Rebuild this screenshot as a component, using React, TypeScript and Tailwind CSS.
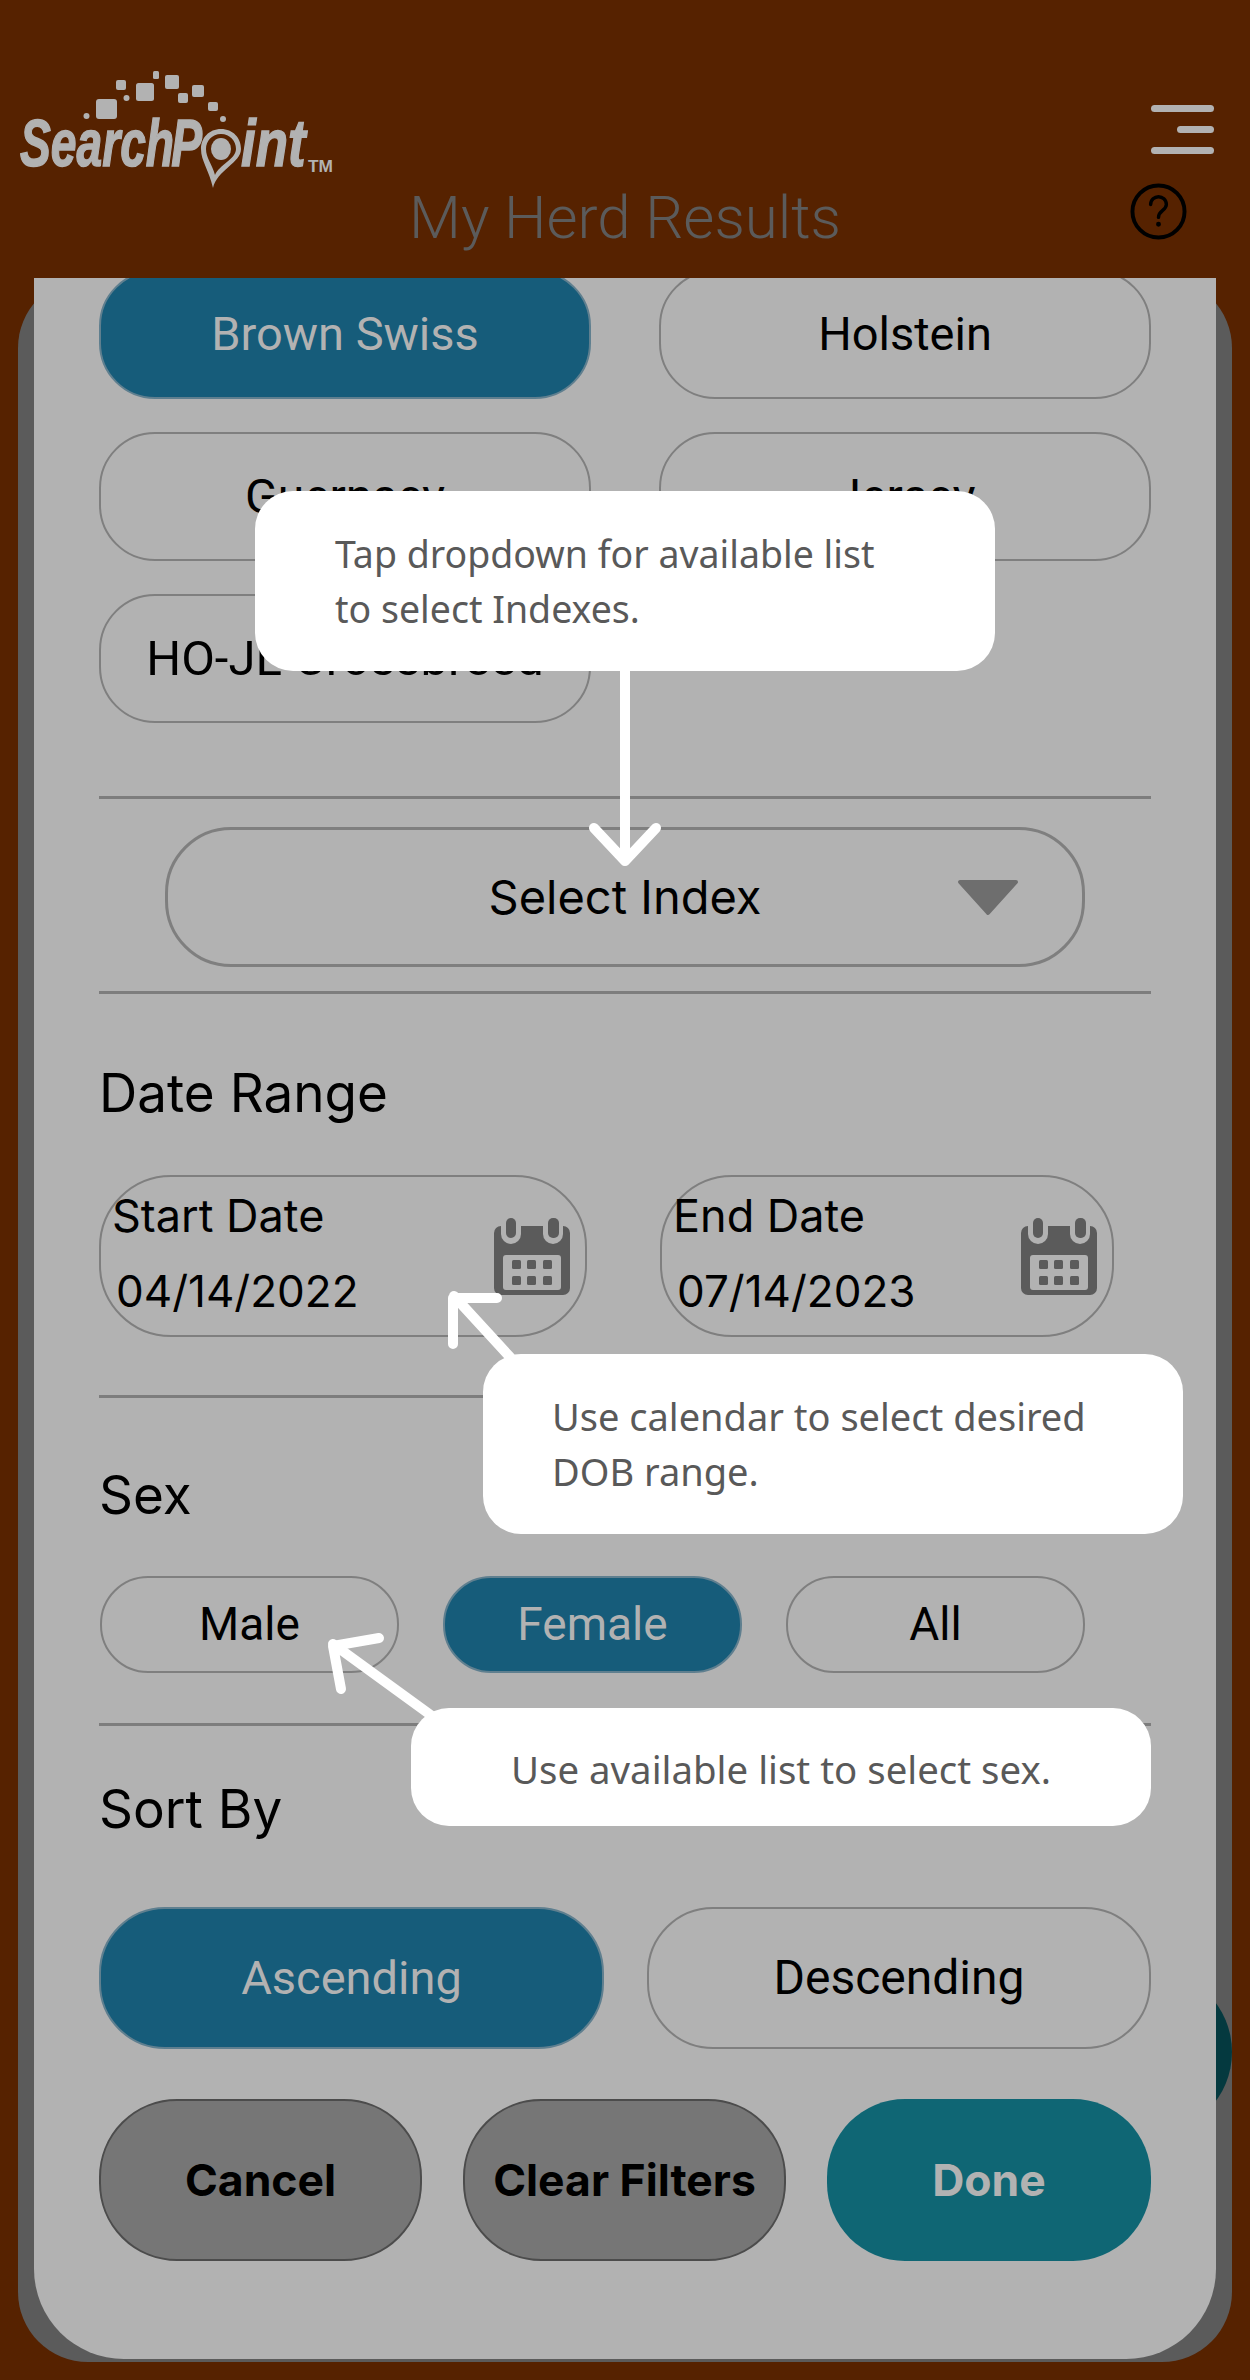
const PILL = "flex items-center justify-center border-2 border-[#7f7f7f] text-black";
const SELECTED = "flex items-center justify-center border-2 border-[#5f7f8f] bg-[#165c7a] text-[#b2b2b2]";
const INTER = "font-['Inter',sans-serif]";

function Logo() {
  return (
    <svg width="340" height="125" viewBox="0 65 340 125" fill="#b2b2b2" className="block shrink-0 overflow-visible">
      <rect x="96" y="99" width="21" height="20" rx="3" />
      <rect x="136" y="83" width="18" height="18" rx="2.5" />
      <rect x="116" y="80" width="10" height="10" rx="2" />
      <rect x="165" y="75" width="14" height="14" rx="2" />
      <rect x="153" y="71" width="6" height="8" rx="1.5" />
      <rect x="178" y="93" width="10" height="10" rx="2" />
      <rect x="192" y="85" width="12" height="12" rx="2" />
      <rect x="208" y="102" width="10" height="9" rx="2" />
      <circle cx="126.500" cy="98" r="3" />
      <circle cx="86.500" cy="116" r="3" />
      <circle cx="223" cy="119" r="3" />
      <text
        transform="translate(20 166) scale(.7 1)"
        fontFamily="'Liberation Sans', sans-serif"
        fontWeight="700"
        fontStyle="italic"
        fontSize="66"
        stroke="#b2b2b2"
        strokeWidth="1.500"
      >
        Search
        <tspan x="216">P</tspan>
        <tspan x="266">o</tspan>
      </text>
      <text
        transform="translate(241 166) scale(.8 1)"
        fontFamily="'Liberation Sans', sans-serif"
        fontWeight="700"
        fontStyle="italic"
        fontSize="66"
        stroke="#b2b2b2"
        strokeWidth="1.500"
      >
        int
      </text>
      <path d="M221 129c-12 0-20 9-20 20 0 12 8 21 12 39 4-18 28-25 28-39 0-11-8-20-20-20z" />
      <path d="M221 134c-9 0-15 7-15 15 0 9 6 15 9 26 4-10 21-16 21-26 0-8-6-15-15-15z" fill="#562200" />
      <ellipse cx="221" cy="149" rx="10" ry="11" />
      <text x="308" y="172" textLength="25" lengthAdjust="spacingAndGlyphs" fontFamily="'Liberation Sans', sans-serif" fontWeight="700" fontSize="17">TM</text>
    </svg>
  );
}

function Hamburger() {
  return (
    <div className="mt-10 mr-9 flex h-[49px] w-[63px] shrink-0 flex-col items-end gap-[14px] self-start">
      <div className="h-[7px] w-full shrink-0 rounded-sm bg-[#b2b2b2]" />
      <div className="h-[7px] w-[37px] shrink-0 rounded-sm bg-[#b2b2b2]" />
      <div className="h-[7px] w-full shrink-0 rounded-sm bg-[#b2b2b2]" />
    </div>
  );
}

function HelpIcon() {
  return (
    <svg width="57" height="57" viewBox="0 0 58 58" fill="none" stroke="#000" strokeWidth="4" strokeLinecap="round">
      <circle cx="29" cy="29" r="26.500" />
      <path d="M21 22c0-5 4-8 8-8s8 3 8 8c0 6-8 6-8 13" strokeWidth="3.500" />
      <circle cx="29" cy="42" r="1.500" fill="#000" strokeWidth="2" />
    </svg>
  );
}

function CalendarIcon() {
  return (
    <svg width="76" height="77" viewBox="0 0 76 77" className="shrink-0">
      <rect x="0" y="8" width="76" height="69" rx="7" fill="#5b5b5b" />
      <rect x="7" y="-2" width="20" height="28" rx="10" fill="#b2b2b2" />
      <rect x="49" y="-2" width="20" height="28" rx="10" fill="#b2b2b2" />
      <rect x="12" y="0" width="10" height="20" rx="5" fill="#5b5b5b" />
      <rect x="54" y="0" width="11" height="20" rx="5" fill="#5b5b5b" />
      <rect x="9" y="37" width="58" height="35" rx="3" fill="#b2b2b2" />
      {[18, 33, 49].map((x) => (
        <g key={x} fill="#5b5b5b">
          <rect x={x} y="42" width="9" height="9" rx="1.500" />
          <rect x={x} y="58" width="9" height="9" rx="1.500" />
        </g>
      ))}
    </svg>
  );
}

function DateBox({ label, value, width }: { label: string; value: string; width: string }) {
  return (
    <div className={`flex h-[162px] items-center justify-between rounded-[72px] border-2 border-[#7f7f7f] pr-[15px] pl-[11px] ${width}`}>
      <div className={`flex flex-col gap-[25px] text-[44px] leading-[50px] text-black ${INTER}`}>
        <span className="-mt-[6px] text-[45px]">{label}</span>
        <span className="pl-[4px]">{value}</span>
      </div>
      <CalendarIcon />
    </div>
  );
}

function Divider({ className }: { className: string }) {
  return <div className={`h-[3px] bg-[#7d7d7d] ${className}`} />;
}

function Tip({ className, children }: { className: string; children: React.ReactNode }) {
  return (
    <div className={`absolute rounded-[38px] bg-white font-['Noto_Sans',sans-serif] leading-[55px] text-[#595959] ${className}`}>
      {children}
    </div>
  );
}

export default function App() {
  return (
    <div className="relative h-[2380px] w-[1250px] overflow-hidden bg-[#562200] font-['Roboto',sans-serif]">
      {/* header */}
      <div className="flex h-[278px] flex-col">
        <div className="flex h-[118px] justify-between pt-[65px]">
          <Logo />
          <Hamburger />
        </div>
        <div className="mt-[65px] grid h-[57px] grid-cols-[1fr_auto_1fr] items-center">
          <div />
          <div className="translate-y-[6px] text-[60px] leading-[57px] font-light text-[#5b5b5b]">My Herd Results</div>
          <div className="flex justify-end pr-[63px]">
            <HelpIcon />
          </div>
        </div>
      </div>

      {/* card behind the sheet */}
      <div className="absolute top-[278px] right-[18px] left-[18px] h-[2084px] overflow-hidden rounded-[70px] bg-[#5b5b5b]">
        <div className="absolute top-[1691px] left-[1048px] h-[166px] w-[166px] rounded-full bg-[#04393f]" />
      </div>

      {/* filter sheet */}
      <div className="relative mx-[34px] h-[2081px] overflow-hidden rounded-b-[90px] bg-[#b2b2b2] px-[65px] text-[47px]">
        <div className="-mt-[8px] grid grid-cols-2 gap-x-[68px] gap-y-[33px]">
          <div className={`${SELECTED} h-[129px] rounded-[56px]`}>Brown Swiss</div>
          <div className={`${PILL} h-[129px] rounded-[56px]`}>Holstein</div>
          <div className={`${PILL} h-[129px] rounded-[56px] text-[48px]`}>Guernsey</div>
          <div className={`${PILL} h-[129px] rounded-[56px] text-[48px]`}>Jersey</div>
          <div className={`${PILL} h-[129px] rounded-[56px] text-[49px]`}>HO-JL Crossbreed</div>
        </div>

        <Divider className="mt-[73px]" />
        <div className={`mx-[66px] mt-[28px] grid h-[140px] grid-cols-[1fr_auto_1fr] items-center rounded-[66px] border-[3px] border-[#7f7f7f] text-[47px] text-black ${INTER}`}>
          <div />
          <div>Select Index</div>
          <div className="flex justify-end pr-[62px]">
            <svg width="64" height="37" viewBox="0 0 64 37">
              <path d="M4 3h56L32 34z" fill="#6e6e6e" stroke="#6e6e6e" strokeWidth="4" strokeLinejoin="round" />
            </svg>
          </div>
        </div>
        <Divider className="mt-[24px]" />

        <div className={`mt-[69px] text-[53px] leading-[60px] text-black ${INTER}`}>Date Range</div>
        <div className="mt-[52px] flex gap-[73px]">
          <DateBox label="Start Date" value="04/14/2022" width="w-[488px]" />
          <DateBox label="End Date" value="07/14/2023" width="w-[454px]" />
        </div>
        <Divider className="mt-[58px]" />

        <div className={`mt-[67px] text-[53px] leading-[60px] text-black ${INTER}`}>Sex</div>
        <div className="mt-[51px] flex gap-[44px] pl-px text-[46px]">
          <div className={`${PILL} h-[97px] w-[299px] rounded-[48px]`}>Male</div>
          <div className={`${SELECTED} h-[97px] w-[299px] rounded-[48px]`}>Female</div>
          <div className={`${PILL} h-[97px] w-[299px] rounded-[48px]`}>All</div>
        </div>
        <Divider className="mt-[50px]" />

        <div className={`mt-[53px] text-[53px] leading-[60px] text-black ${INTER}`}>Sort By</div>
        <div className="mt-[68px] flex gap-[43px]">
          <div className={`${SELECTED} h-[142px] w-[505px] rounded-[66px] text-[47px]`}>Ascending</div>
          <div className={`${PILL} h-[142px] w-[504px] rounded-[66px] text-[48px]`}>Descending</div>
        </div>

        <div className={`mt-[50px] flex gap-[41px] text-[44.500px] font-bold ${INTER}`}>
          <div className="flex h-[162px] w-[323px] items-center justify-center rounded-[78px] border-2 border-[#4c4c4c] bg-[#767676] text-black">Cancel</div>
          <div className="flex h-[162px] w-[323px] items-center justify-center rounded-[78px] border-2 border-[#4c4c4c] bg-[#767676] text-black">Clear Filters</div>
          <div className="flex h-[162px] w-[324px] items-center justify-center rounded-[78px] bg-[#0f6674] text-[#b2b2b2]">Done</div>
        </div>
      </div>

      {/* coach marks */}
      <svg width="1250" height="2380" viewBox="0 0 1250 2380" className="absolute top-0 left-0" fill="none" stroke="#fff" strokeWidth="10" strokeLinecap="round" strokeLinejoin="round">
        <path d="M625 660V858M594 828l31 33 31-33" />
        <path d="M510 1357L454 1296M497 1298H453V1344" />
        <path d="M432 1716L333 1644M379 1638L333 1646L341 1689" />
      </svg>
      <Tip className="top-[491px] left-[255px] h-[180px] w-[740px] pt-[35px] pl-[80px] text-[37.500px]">
        Tap dropdown for available list
        <br />
        to select Indexes.
      </Tip>
      <Tip className="top-[1354px] left-[483px] h-[180px] w-[700px] pt-[35px] pl-[69px] text-[38px]">
        Use calendar to select desired
        <br />
        DOB range.
      </Tip>
      <Tip className="top-[1708px] left-[411px] flex h-[118px] w-[740px] items-center justify-center pt-[5px] text-[38.400px]">
        Use available list to select sex.
      </Tip>
    </div>
  );
}
